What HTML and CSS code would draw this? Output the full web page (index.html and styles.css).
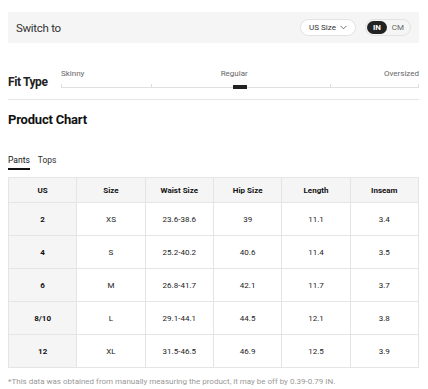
FILE: index.html
```html
<!DOCTYPE html>
<html>
<head>
<meta charset="utf-8">
<link rel="stylesheet" href="styles.css">
</head>
<body>
<div class="page">
  <div class="switch-bar">
    <span class="switch-label">Switch to</span>
    <div class="switch-controls">
      <button class="size-select">US Size <svg class="chev" width="7" height="5" viewBox="0 0 7 5"><path d="M0.5 0.8 L3.5 3.8 L6.5 0.8" fill="none" stroke="#555" stroke-width="0.8"/></svg></button>
      <div class="unit-toggle">
        <span class="unit active">IN</span>
        <span class="unit">CM</span>
      </div>
    </div>
  </div>

  <div class="fit">
    <div class="fit-label">Fit Type</div>
    <div class="fit-slider">
      <div class="fit-names">
        <span>Skinny</span>
        <span>Regular</span>
        <span>Oversized</span>
      </div>
      <div class="track">
        <span class="tick t0"></span>
        <span class="tick t25"></span>
        <span class="tick t75"></span>
        <span class="tick t100"></span>
        <span class="marker"></span>
      </div>
    </div>
  </div>

  <h2 class="chart-title">Product Chart</h2>

  <div class="tabs">
    <span class="tab active">Pants</span>
    <span class="tab">Tops</span>
  </div>

  <table class="chart">
    <thead>
      <tr><th>US</th><th>Size</th><th>Waist Size</th><th>Hip Size</th><th>Length</th><th>Inseam</th></tr>
    </thead>
    <tbody>
      <tr><th>2</th><td>XS</td><td>23.6-38.6</td><td>39</td><td>11.1</td><td>3.4</td></tr>
      <tr><th>4</th><td>S</td><td>25.2-40.2</td><td>40.6</td><td>11.4</td><td>3.5</td></tr>
      <tr><th>6</th><td>M</td><td>26.8-41.7</td><td>42.1</td><td>11.7</td><td>3.7</td></tr>
      <tr><th>8/10</th><td>L</td><td>29.1-44.1</td><td>44.5</td><td>12.1</td><td>3.8</td></tr>
      <tr><th>12</th><td>XL</td><td>31.5-46.5</td><td>46.9</td><td>12.5</td><td>3.9</td></tr>
    </tbody>
  </table>

  <p class="note">*This data was obtained from manually measuring the product, it may be off by 0.39-0.79 IN.</p>
</div>
</body>
</html>
```

FILE: styles.css
```css
html, body {
  margin: 0;
  padding: 0;
  background: #fff;
}
body {
  font-family: "Roboto", "Noto Sans", sans-serif;
  color: #222;
}
.page {
  padding: 12px 9px 0 8px;
}
.switch-bar {
  height: 31px;
  background: #f5f5f5;
  display: flex;
  align-items: center;
  justify-content: space-between;
  padding: 0 8px;
  box-sizing: border-box;
}
.switch-label {
  font-size: 11.5px;
  letter-spacing: -0.3px;
  color: #333;
}
.switch-controls {
  display: flex;
  align-items: center;
  gap: 9px;
}
.size-select {
  height: 17px;
  width: 56px;
  border: 1px solid #e2e2e2;
  border-radius: 9px;
  background: #fff;
  font-family: inherit;
  font-size: 8px;
  color: #333;
  padding: 0;
  display: flex;
  align-items: center;
  justify-content: center;
  gap: 4px;
  box-sizing: border-box;
}
.chev {
  display: block;
}
.unit-toggle {
  height: 17px;
  width: 46px;
  border: 1px solid #e2e2e2;
  border-radius: 9px;
  background: #f5f5f5;
  display: flex;
  align-items: center;
  box-sizing: border-box;
  padding: 1px;
}
.unit {
  font-size: 8px;
  color: #666;
  height: 13px;
  line-height: 13px;
  padding: 0 5px;
  border-radius: 7px;
}
.unit.active {
  background: #222;
  color: #fff;
  font-weight: 700;
  width: 20px;
  padding: 0;
  text-align: center;
}
.fit {
  display: flex;
  align-items: flex-end;
  margin-top: 26px;
  padding-bottom: 11px;
  border-bottom: 1px solid #e5e5e5;
}
.fit-label {
  width: 53px;
  font-size: 12px;
  letter-spacing: -0.4px;
  font-weight: 700;
  color: #222;
  line-height: 14px;
  margin-bottom: -1px;
}
.fit-slider {
  flex: 1;
}
.fit-names {
  display: flex;
  justify-content: space-between;
  font-size: 8px;
  color: #666;
  line-height: 10px;
}
.track {
  position: relative;
  height: 8px;
  border-bottom: 1px solid #e0e0e0;
}
.tick {
  position: absolute;
  bottom: 0;
  width: 1px;
  height: 3px;
  background: #ddd;
}
.t0 { left: 0; }
.t25 { left: 25%; }
.t75 { left: 75%; }
.t100 { right: 0; }
.marker {
  position: absolute;
  left: 50%;
  bottom: -2px;
  width: 14px;
  height: 4px;
  margin-left: -7px;
  background: #222;
}
.chart-title {
  margin: 11px 0 0;
  font-size: 13px;
  letter-spacing: -0.2px;
  font-weight: 700;
  color: #111;
  line-height: 18px;
}
.tabs {
  display: flex;
  gap: 8px;
  margin-top: 26px;
}
.tab {
  font-size: 8.5px;
  color: #333;
  padding-bottom: 3px;
  line-height: 10px;
}
.tab.active {
  color: #111;
  border-bottom: 2px solid #111;
}
.chart {
  margin-top: 7px;
  width: 100%;
  border-collapse: collapse;
  table-layout: fixed;
}
.chart th, .chart td {
  border: 1px solid #e5e5e5;
  text-align: center;
  font-size: 8px;
  padding: 0;
}
.chart thead th {
  height: 24px;
  background: #f5f5f5;
  font-weight: 700;
  color: #111;
}
.chart tbody th {
  background: #f5f5f5;
  font-weight: 700;
  color: #111;
}
.chart td, .chart tbody th {
  height: 32px;
}
.chart td {
  color: #222;
}
.note {
  margin: 9px 0 0;
  font-size: 8px;
  color: #999;
}
```
